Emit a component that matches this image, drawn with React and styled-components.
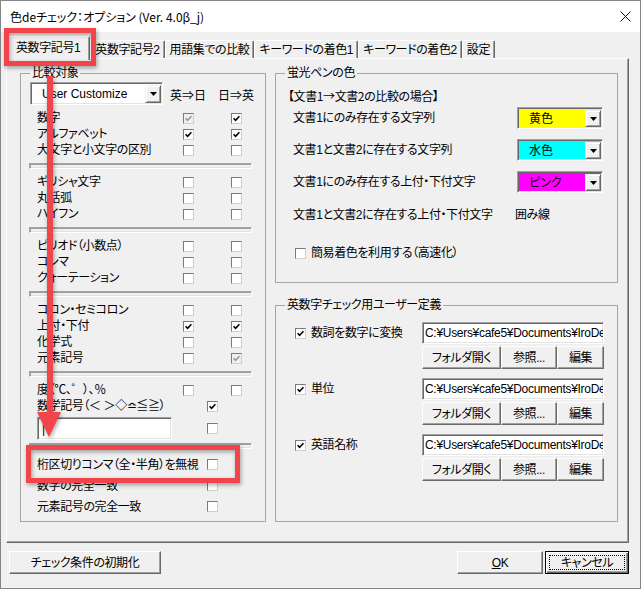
import React from 'react';
import styled, { createGlobalStyle } from 'styled-components';

const GlobalStyle = createGlobalStyle`
  * { box-sizing: border-box; }
  html, body { margin: 0; padding: 0; background: #f0f0f0; }
  body {
    font-family: "Liberation Sans", "Noto Sans CJK JP", sans-serif;
    font-size: 12px;
    line-height: 16px;
    color: #000;
    font-feature-settings: "palt";
  }
`;

const Window = styled.div`
  position: relative;
  width: 641px;
  height: 589px;
  border: 1px solid #858585;
  background: #f0f0f0;
  display: flex;
  flex-direction: column;
  overflow: hidden;
`;

const TitleBar = styled.div`
  flex: none;
  height: 31px;
  background: #fff;
  display: flex;
  align-items: center;
  justify-content: space-between;
  padding-left: 9px;
  font-family: "Noto Sans CJK JP", sans-serif;
  font-size: 12px;
`;

const CloseButton = styled.div`
  width: 30px;
  height: 31px;
  display: flex;
  align-items: center;
  justify-content: center;
`;

const Body = styled.div`
  flex: 1;
  padding: 4px 0 0 5px;
  letter-spacing: -0.4px;
`;

const TabStrip = styled.div`
  display: flex;
  align-items: flex-end;
  height: 22px;
`;

const Tab = styled.div`
  position: relative;
  z-index: ${p => (p.$active ? 3 : 0)};
  height: ${p => (p.$active ? 24 : 18)}px;
  margin-bottom: ${p => (p.$active ? -2 : 0)}px;
  padding: 0 ${p => (p.$active ? 9 : 4)}px ${p => (p.$active ? 2 : 0)}px;
  display: flex;
  align-items: center;
  white-space: nowrap;
  background: #f0f0f0;
  border: 1px solid;
  border-bottom: none;
  border-color: #fff #696969 transparent #fff;
  border-radius: 2px 2px 0 0;
  box-shadow: inset -1px 0 #a0a0a0;
`;

const Panel = styled.div`
  position: relative;
  z-index: 1;
  width: 623px;
  height: 485px;
  border: 1px solid;
  border-color: #fff #696969 #696969 #fff;
  box-shadow: inset -1px -1px #a0a0a0;
  display: flex;
  gap: 9px;
  padding: 7px 0 0 13px;
`;

const Group = styled.fieldset`
  margin: 0;
  padding: 0;
  min-width: 0;
  width: ${p => p.$w}px;
  height: ${p => p.$h}px;
  border: 1px solid #a6a6a6;
  display: flex;
  flex-direction: column;
`;

const Legend = styled.legend`
  margin-left: 9px;
  padding: 0 2px;
  font-size: 12px;
  line-height: 14px;
`;

const Column = styled.div`
  display: flex;
  flex-direction: column;
  gap: 15px;
`;

const TopRow = styled.div`
  display: grid;
  grid-template-columns: 1fr 48px 48px;
  align-items: end;
  justify-items: center;
  height: 23px;
  margin: 2px 0 5px;
  padding: 0 5px 0 9px;
`;

const Header = styled.span`
  white-space: nowrap;
  line-height: 15px;
  margin-bottom: 1px;
  letter-spacing: 0;
`;

const Sunken = styled.div`
  display: flex;
  width: ${p => p.$w}px;
  height: ${p => p.$h}px;
  padding: 2px 1px 1px 2px;
  border: 1px solid;
  border-color: #a0a0a0 #fff #fff #a0a0a0;
  box-shadow: inset 1px 1px #696969, inset -1px -1px #e3e3e3;
  background: ${p => p.$bg || '#fff'};
  justify-self: start;
  overflow: hidden;
  letter-spacing: 0;
`;

const ComboText = styled.span`
  flex: 1;
  padding-left: ${p => p.$pad || 8}px;
  display: flex;
  align-items: center;
  white-space: nowrap;
`;

const DropButton = styled.span`
  width: 16px;
  flex: none;
  background: #f0f0f0;
  border: 1px solid;
  border-color: #f0f0f0 #696969 #696969 #f0f0f0;
  box-shadow: inset 1px 1px #fff, inset -1px -1px #a0a0a0;
  display: flex;
  align-items: center;
  justify-content: center;
`;

const CheckRow = styled.div`
  display: grid;
  grid-template-columns: 1fr 48px 48px;
  align-items: center;
  justify-items: center;
  height: 16px;
  padding: 0 5px 0 16px;
`;

const SoloRow = styled.div`
  display: grid;
  grid-template-columns: 170px 11px;
  align-items: center;
  height: ${p => p.$h}px;
  margin-top: ${p => p.$mt || 0}px;
  padding-left: 16px;
`;

const RowLabel = styled.span`
  justify-self: start;
  white-space: nowrap;
`;

const Separator = styled.div`
  height: 6px;
  margin: ${p => p.$mt ?? 5}px 13px 5px 8px;
  border: 1px solid;
  border-color: #a0a0a0 #fff #fff #a0a0a0;
  box-shadow: 1px 1px #a0a0a0 inset, -1px -1px #e3e3e3 inset;
`;

const Box = styled.span`
  width: 11px;
  height: 11px;
  flex: none;
  display: inline-flex;
  align-items: center;
  justify-content: center;
  background: ${p => (p.$disabled ? '#f0f0f0' : '#fff')};
  border: 1px solid;
  border-color: #7a7a7a #cfcfcf #cfcfcf #7a7a7a;
`;

const Heading = styled.div`
  margin-top: 8px;
  padding-left: 12px;
  line-height: 15px;
  font-family: "Noto Sans CJK JP", sans-serif;
`;

const ColorRow = styled.div`
  display: flex;
  align-items: center;
  justify-content: space-between;
  height: 22px;
  margin-top: ${p => p.$mt}px;
  padding: 0 14px 0 17px;
`;

const PlainValue = styled.span`
  width: 88px;
`;

const LabelCheck = styled.label`
  display: flex;
  align-items: center;
  gap: 5px;
  margin-top: ${p => p.$mt || 0}px;
  padding-left: ${p => p.$pl ?? 19}px;
  white-space: nowrap;
`;

const UserRow = styled.div`
  display: grid;
  grid-template-columns: 1fr 182px;
  grid-template-rows: 22px 23px;
  row-gap: 2px;
  margin-top: ${p => p.$mt}px;
  padding: 0 13px 0 19px;
`;

const PathText = styled.span`
  line-height: 17px;
  white-space: nowrap;
  letter-spacing: -0.3px;
  font-family: "Liberation Sans", sans-serif;
`;

const ButtonBar = styled.div`
  display: flex;
`;

const Button = styled.button`
  width: ${p => p.$w}px;
  height: 23px;
  padding: 0;
  font: inherit;
  letter-spacing: inherit;
  color: #000;
  background: #f0f0f0;
  border: 1px solid;
  border-color: ${p => (p.$default ? '#000' : '#fff #696969 #696969 #fff')};
  box-shadow: ${p =>
    p.$default
      ? 'inset 1px 1px #fff, inset -1px -1px #696969, inset -2px -2px #a0a0a0'
      : 'inset -1px -1px #a0a0a0'};
  display: flex;
  align-items: center;
  justify-content: center;
  white-space: nowrap;
`;

const FocusRing = styled.span`
  flex: 1;
  align-self: stretch;
  margin: 3px;
  border: 1px dotted #000;
  display: flex;
  align-items: center;
  justify-content: center;
`;

const Footer = styled.div`
  width: 623px;
  display: flex;
  justify-content: space-between;
  margin-top: 8px;
  padding-left: 3px;
`;

const FooterRight = styled.div`
  display: flex;
  gap: 2px;
`;

const Annotations = styled.svg`
  position: absolute;
  left: -1px;
  top: -1px;
  pointer-events: none;
  z-index: 10;
  filter: drop-shadow(1px 2px 2px rgba(0, 0, 0, 0.35));
`;

const Check = ({ state }) => (
  <Box $disabled={state === 'dis'}>
    {state !== 'off' && (
      <svg width="7" height="7" viewBox="0 0 7 7">
        <path d="M0.6 3.2 L2.6 5.3 L6.4 1.2" fill="none" stroke={state === 'dis' ? '#9a9a9a' : '#000'} strokeWidth="1.6" />
      </svg>
    )}
  </Box>
);

const Arrow = () => (
  <svg width="7" height="4" viewBox="0 0 7 4">
    <path d="M0 0 H7 L3.5 4 Z" fill="#000" />
  </svg>
);

const Combo = ({ w, h, bg, pad, children }) => (
  <Sunken $w={w} $h={h} $bg={bg}>
    <ComboText $pad={pad}>{children}</ComboText>
    <DropButton>
      <Arrow />
    </DropButton>
  </Sunken>
);

const sections = [
  [['数字', 'dis', 'on'], ['アルファベット', 'on', 'on'], ['大文字と小文字の区別', 'off', 'off']],
  [['ギリシャ文字', 'off', 'off'], ['丸括弧', 'off', 'off'], ['ハイフン', 'off', 'off']],
  [['ピリオド（小数点）', 'off', 'off'], ['コンマ', 'off', 'off'], ['クォーテーション', 'off', 'off']],
  [['コロン・セミコロン', 'off', 'off'], ['上付・下付', 'on', 'on'], ['化学式', 'off', 'off'], ['元素記号', 'off', 'dis']],
];

const tabs = ['英数字記号1', '英数字記号2', '用語集での比較', 'キーワードの着色1', 'キーワードの着色2', '設定'];

const colorRows = [
  ['文書1にのみ存在する文字列', '黄色', '#ffff00', 4],
  ['文書1と文書2に存在する文字列', '水色', '#00ffff', 10],
  ['文書1にのみ存在する上付・下付文字', 'ピンク', '#ff00ff', 10],
];

const userRows = [
  ['数詞を数字に変換', 10],
  ['単位', 9],
  ['英語名称', 9],
];

export default function App() {
  return (
    <>
      <GlobalStyle />
      <Window>
        <TitleBar>
          <span>色deチェック：オプション (Ver. 4.0β_j)</span>
          <CloseButton>
            <svg width="11" height="11" viewBox="0 0 11 11">
              <path d="M0.5 0.5 L10.5 10.5 M10.5 0.5 L0.5 10.5" stroke="#111" strokeWidth="1" />
            </svg>
          </CloseButton>
        </TitleBar>
        <Body>
          <TabStrip>
            {tabs.map((t, i) => (
              <Tab key={t} $active={i === 0}>{t}</Tab>
            ))}
          </TabStrip>
          <Panel>
            <Group $w={246} $h={456}>
              <Legend>比較対象</Legend>
              <TopRow>
                <Combo w={133} h={23} pad={9}>User Customize</Combo>
                <Header>英⇒日</Header>
                <Header>日⇒英</Header>
              </TopRow>
              {sections.map((rows, si) => (
                <React.Fragment key={si}>
                  {si > 0 && <Separator />}
                  {rows.map(([label, a, b]) => (
                    <CheckRow key={label}>
                      <RowLabel>{label}</RowLabel>
                      <Check state={a} />
                      <Check state={b} />
                    </CheckRow>
                  ))}
                </React.Fragment>
              ))}
              <Separator />
              <CheckRow>
                <RowLabel>度（℃、゜）、％</RowLabel>
                <Check state="off" />
                <Check state="off" />
              </CheckRow>
              <SoloRow $h={16}>
                <RowLabel>数学記号（＜ ＞◇≏≦≧）</RowLabel>
                <Check state="on" />
              </SoloRow>
              <SoloRow $h={23} $mt={3}>
                <Sunken $w={135} $h={23}>
                  <ComboText $pad={2}>|</ComboText>
                </Sunken>
                <Check state="off" />
              </SoloRow>
              <Separator $mt={3} />
              <SoloRow $h={21}>
                <RowLabel>桁区切りコンマ（全・半角）を無視</RowLabel>
                <Check state="off" />
              </SoloRow>
              <SoloRow $h={21}>
                <RowLabel>数字の完全一致</RowLabel>
                <Check state="off" />
              </SoloRow>
              <SoloRow $h={21}>
                <RowLabel>元素記号の完全一致</RowLabel>
                <Check state="off" />
              </SoloRow>
            </Group>
            <Column>
              <Group $w={343} $h={217}>
                <Legend>蛍光ペンの色</Legend>
                <Heading>【文書1→文書2の比較の場合】</Heading>
                {colorRows.map(([label, name, color, mt]) => (
                  <ColorRow key={label} $mt={mt}>
                    <span>{label}</span>
                    <Combo w={86} h={22} bg={color} pad={9}>{name}</Combo>
                  </ColorRow>
                ))}
                <ColorRow $mt={11}>
                  <span>文書1と文書2に存在する上付・下付文字</span>
                  <PlainValue>囲み線</PlainValue>
                </ColorRow>
                <LabelCheck $mt={19}>
                  <Check state="off" />
                  簡易着色を利用する（高速化）
                </LabelCheck>
              </Group>
              <Group $w={343} $h={224}>
                <Legend>英数字チェック用ユーザー定義</Legend>
                {userRows.map(([label, mt]) => (
                  <UserRow key={label} $mt={mt}>
                    <LabelCheck as="div" $pl={0}>
                      <Check state="on" />
                      {label}
                    </LabelCheck>
                    <Sunken $w={182} $h={22}>
                      <PathText>C:¥Users¥cafe5¥Documents¥IroDeCheck</PathText>
                    </Sunken>
                    <span />
                    <ButtonBar>
                      <Button $w={79}>フォルダ開く</Button>
                      <Button $w={56}>参照...</Button>
                      <Button $w={47}>編集</Button>
                    </ButtonBar>
                  </UserRow>
                ))}
              </Group>
            </Column>
          </Panel>
          <Footer>
            <Button $w={152}>チェック条件の初期化</Button>
            <FooterRight>
              <Button $w={86}><u>O</u>K</Button>
              <Button $w={84} $default>
                <FocusRing>キャンセル</FocusRing>
              </Button>
            </FooterRight>
          </Footer>
        </Body>
        <Annotations width="641" height="589" viewBox="0 0 641 589">
          <rect x="6.5" y="30.5" width="87" height="33" fill="none" stroke="#f2454b" strokeWidth="5" />
          <path d="M47 76 H53 V414 H47 Z" fill="#f2454b" />
          <path d="M37 412 H61 L49 437 Z" fill="#f2454b" />
          <rect x="28.5" y="447.5" width="209" height="33" fill="none" stroke="#f2454b" strokeWidth="5" />
        </Annotations>
      </Window>
    </>
  );
}
